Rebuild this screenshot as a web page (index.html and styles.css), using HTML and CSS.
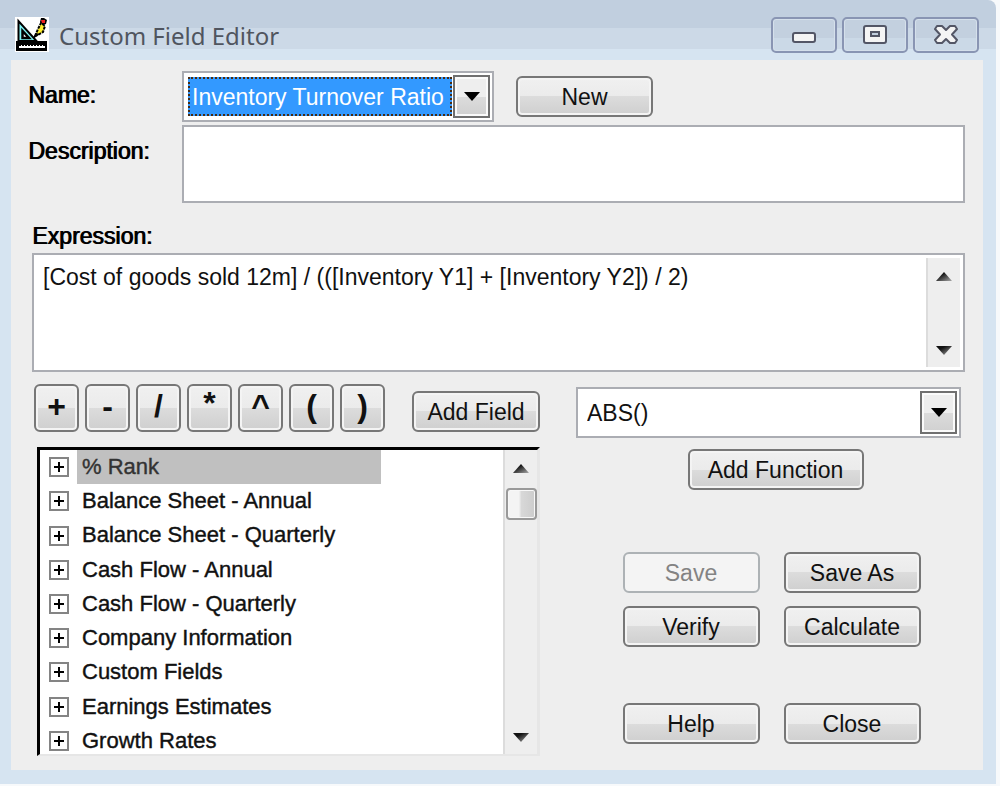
FILE: index.html
```html
<!DOCTYPE html>
<html lang="en">
<head>
<meta charset="utf-8">
<meta name="viewport" content="width=device-width, initial-scale=1">
<title>Custom Field Editor</title>
<link rel="stylesheet" href="styles.css">
</head>
<body>
<svg class="defs" width="0" height="0" aria-hidden="true">
  <linearGradient id="shade" x1="0" y1="0" x2="1" y2="1"><stop offset="0.3" stop-color="#111"/><stop offset="1" stop-color="#aaa"/></linearGradient>
</svg>
<div class="window">
  <header class="titlebar">
    <svg class="app-icon" viewBox="0 0 34 35" aria-hidden="true">
      <rect width="34" height="35" fill="#fff"/>
      <path d="M3.500 4v20h18z" fill="#7ff4f4" stroke="#000" stroke-width="2"/>
      <path d="M7.500 14v7h6.500z" fill="#fff" stroke="#000" stroke-width="2.500"/>
      <path d="M20 19l3-7 3-6 4 3-2 6-5 3z" fill="#ffee2a" stroke="#000" stroke-width="2" stroke-dasharray="3 1"/>
      <path d="M25 5l1-4h3l3 2-1 4-3 1z" fill="#000"/>
      <path d="M26 3h4v3h-3z" fill="#f02020"/>
      <path d="M18 22l3-6 4 1z" fill="#000"/>
      <path d="M1 24h31v10H1z" fill="#000"/>
      <path d="M4 31h26v-2h-2v-1h-1v1h-2v-1h-1v1h-2v-1h-1v1h-2v-1h-1v1h-2v-1h-1v1h-2v-1h-1v1h-2v-1H9v1H7v-1H6v1H4z" fill="#fff"/>
    </svg>
    <h1 class="title">Custom Field Editor</h1>
    <div class="window-buttons">
      <button class="window-button" type="button" aria-label="Minimize">
        <svg width="26" height="22" viewBox="0 0 26 22"><rect x="2" y="9" width="22" height="9" rx="2" fill="#f4f4f4" stroke="#535666" stroke-width="2"/></svg>
      </button>
      <button class="window-button" type="button" aria-label="Maximize">
        <svg width="26" height="22" viewBox="0 0 26 22"><rect x="2" y="2" width="22" height="17" rx="2" fill="#f4f4f4" stroke="#535666" stroke-width="2"/><rect x="9" y="8" width="8" height="4" fill="#c3d0df" stroke="#535666" stroke-width="2"/></svg>
      </button>
      <button class="window-button" type="button" aria-label="Close window">
        <svg width="26" height="22" viewBox="0 0 26 22"><path d="M4 2h5l4 4 4-4h5l2 3-5 5.500 5 5.500-2 3h-5l-4-4-4 4H4l-2-3 5-5.500L2 5z" fill="#f4f4f4" stroke="#535666" stroke-width="2" stroke-linejoin="round"/></svg>
      </button>
    </div>
  </header>

  <main class="panel">
    <div class="fields">
      <label class="label name-label" for="name">Name:</label>
      <div class="name-row">
        <div class="combo combo-name">
          <select id="name" class="select select-active"><option>Inventory Turnover Ratio</option></select>
          <span class="combo-arrow" aria-hidden="true"><svg width="16" height="9" viewBox="0 0 16 9"><path d="M0 0h16L8 9z"/></svg></span>
        </div>
        <button class="button" type="button">New</button>
      </div>
      <label class="label description-label" for="description">Description:</label>
      <textarea id="description" class="description"></textarea>
    </div>

    <div class="expression">
      <label class="label" for="expression">Expression:</label>
      <div class="expression-box">
        <textarea id="expression" class="expression-text">[Cost of goods sold 12m] / (([Inventory Y1] + [Inventory Y2]) / 2)</textarea>
        <div class="scrollbar" aria-hidden="true">
          <svg width="16" height="9" viewBox="0 0 16 9"><path d="M0 9h16L8 0z"/></svg>
          <svg width="16" height="9" viewBox="0 0 16 9"><path d="M0 0h16L8 9z"/></svg>
        </div>
      </div>
    </div>

    <div class="lower">
      <section class="picker">
        <div class="toolbar">
          <div class="operators">
            <button class="button operator" type="button">+</button>
            <button class="button operator" type="button">-</button>
            <button class="button operator" type="button">/</button>
            <button class="button operator raised" type="button">*</button>
            <button class="button operator" type="button">^</button>
            <button class="button operator" type="button">(</button>
            <button class="button operator" type="button">)</button>
          </div>
          <button class="button add-field" type="button">Add Field</button>
        </div>
        <div class="tree">
          <ul class="tree-list">
            <li class="tree-item"><button class="expander" type="button" aria-label="Expand % Rank"></button><span class="tree-name selected">% Rank</span></li>
            <li class="tree-item"><button class="expander" type="button" aria-label="Expand Balance Sheet - Annual"></button><span class="tree-name">Balance Sheet - Annual</span></li>
            <li class="tree-item"><button class="expander" type="button" aria-label="Expand Balance Sheet - Quarterly"></button><span class="tree-name">Balance Sheet - Quarterly</span></li>
            <li class="tree-item"><button class="expander" type="button" aria-label="Expand Cash Flow - Annual"></button><span class="tree-name">Cash Flow - Annual</span></li>
            <li class="tree-item"><button class="expander" type="button" aria-label="Expand Cash Flow - Quarterly"></button><span class="tree-name">Cash Flow - Quarterly</span></li>
            <li class="tree-item"><button class="expander" type="button" aria-label="Expand Company Information"></button><span class="tree-name">Company Information</span></li>
            <li class="tree-item"><button class="expander" type="button" aria-label="Expand Custom Fields"></button><span class="tree-name">Custom Fields</span></li>
            <li class="tree-item"><button class="expander" type="button" aria-label="Expand Earnings Estimates"></button><span class="tree-name">Earnings Estimates</span></li>
            <li class="tree-item"><button class="expander" type="button" aria-label="Expand Growth Rates"></button><span class="tree-name">Growth Rates</span></li>
          </ul>
          <div class="scrollbar tree-scrollbar" aria-hidden="true">
            <svg width="16" height="9" viewBox="0 0 16 9"><path d="M0 9h16L8 0z"/></svg>
            <span class="thumb"></span>
            <svg class="scroll-down" width="16" height="9" viewBox="0 0 16 9"><path d="M0 0h16L8 9z"/></svg>
          </div>
        </div>
      </section>

      <section class="functions">
        <div class="combo">
          <select class="select" aria-label="Function"><option>ABS()</option></select>
          <span class="combo-arrow" aria-hidden="true"><svg width="16" height="9" viewBox="0 0 16 9"><path d="M0 0h16L8 9z"/></svg></span>
        </div>
        <button class="button add-function" type="button">Add Function</button>
        <div class="actions">
          <button class="button" type="button" disabled>Save</button>
          <button class="button" type="button">Save As</button>
          <button class="button" type="button">Verify</button>
          <button class="button" type="button">Calculate</button>
        </div>
        <div class="actions actions-end">
          <button class="button" type="button">Help</button>
          <button class="button" type="button">Close</button>
        </div>
      </section>
    </div>
  </main>
</div>
</body>
</html>
```
FILE: styles.css
```css
* { box-sizing: border-box; }

body {
  margin: 0;
  background: #f7f9fb;
  color: #111;
  font-family: "Liberation Sans", Arial, sans-serif;
  font-size: 23px;
}

button, select, textarea { font: inherit; color: inherit; }

.defs { display: block; }

.window {
  margin-right: 4px;
  padding: 0 13px 14px 11px;
  border-radius: 0 8px 0 0;
  background: linear-gradient(#c1cfdf 0 28px, #ccd9e7 28px 49px, #d6e4f1 49px);
}

.titlebar {
  display: flex;
  align-items: flex-start;
  height: 60px;
  padding: 17px 4px 0 4px;
}

.app-icon { width: 34px; height: 35px; }

.title {
  flex: 1;
  margin: 2px 0 0 10px;
  color: #50555f;
  font: 24px/34px "Noto Sans", "Open Sans", sans-serif;
}

.window-buttons { display: flex; gap: 5px; }

.window-button {
  display: grid;
  place-items: center;
  width: 66px;
  height: 36px;
  padding: 0;
  border: 2px solid #8995b3;
  border-radius: 5px;
  background: linear-gradient(#c3d0df 60%, #cbd9e7 60%);
  box-shadow: inset 0 0 0 1px #d5e0eb;
}

.panel {
  padding: 11px 18px 14px 17px;
  background: #eee;
}

.label { line-height: 28px; text-shadow: 1px 0 #000; color: #000; }

.fields {
  display: grid;
  grid-template-columns: 154px 1fr;
  row-gap: 3px;
}

.name-label { padding-top: 10px; }
.description-label { padding-top: 12px; }

.name-row { display: flex; align-items: center; gap: 22px; }

.combo {
  display: grid;
  grid-template-columns: 1fr 37px;
  gap: 3px;
  height: 51px;
  padding: 2px;
  border: 2px solid #abadb3;
  background: #fff;
}

.combo-name { width: 312px; }

.select {
  appearance: none;
  grid-area: 1 / 1 / 2 / 3;
  width: 100%;
  padding: 0 40px 0 7px;
  border: 0;
  background: transparent;
}

.select-active {
  width: 264px;
  margin: 2px 0 2px 2px;
  padding: 0 0 0 2px;
  border: 2px dotted #4a2b10;
  background: #3399ff;
  color: #fff;
}

.combo-arrow {
  grid-area: 1 / 2;
  display: grid;
  place-items: center;
  border: 2px solid #707070;
  background: linear-gradient(#eee 50%, #dcdcdc 50%, #d0d0d0);
  box-shadow: inset 0 0 0 2px #fafafa;
  pointer-events: none;
}

.button {
  min-width: 137px;
  height: 41px;
  padding: 0;
  border: 2px solid #777;
  border-radius: 6px;
  background: linear-gradient(#f0f0f0, #ebebeb 50%, #dcdcdc 50%, #cfcfcf);
  box-shadow: inset 0 0 0 2px #f4f4f4;
  line-height: 26px;
}

.button:disabled {
  border-color: #adb2b5;
  background: #f4f4f4;
  color: #838383;
}

textarea { resize: none; border: 0; background: #fff; }

.description {
  width: 100%;
  height: 78px;
  padding: 8px;
  border: 2px solid #abadb3;
}

.expression { margin-top: 19px; padding-left: 4px; }
.expression .label { display: block; }

.expression-box {
  display: flex;
  height: 119px;
  margin-top: 3px;
  padding: 3px;
  border: 2px solid #abadb3;
  background: #fff;
}

.expression-text { flex: 1; padding: 5px 0 0 6px; overflow: hidden; line-height: 28px; }

.scrollbar {
  display: flex;
  flex-direction: column;
  align-items: center;
  justify-content: space-between;
  width: 34px;
  padding: 14px 0 12px;
  border-left: 2px solid #dcdcdc;
  background: #eee;
  fill: url(#shade);
}

.lower {
  display: grid;
  grid-template-columns: 506px 1fr;
  gap: 36px;
  margin-top: 12px;
  padding: 0 4px 0 6px;
}

.toolbar { display: flex; align-items: flex-end; justify-content: space-between; }
.operators { display: flex; gap: 6px; }

.operator {
  min-width: 45px;
  height: 48px;
  padding-bottom: 5px;
  font-size: 32px;
  font-weight: bold;
}

.raised { padding-bottom: 10px; }

.add-field { min-width: 128px; }

.tree {
  display: flex;
  height: 309px;
  margin: 15px 0 0 3px;
  border: solid;
  border-width: 3px 3px 2px;
  border-color: #000 #e6e6e6 #e6e6e6 #000;
  background: #fff;
  overflow: hidden;
}

.tree-list {
  flex: 1;
  display: grid;
  grid-template-rows: repeat(9, 1fr);
  height: 308px;
  margin: 0;
  padding: 0;
  list-style: none;
  font-size: 22px;
}

.tree-item { display: flex; align-items: center; gap: 8px; padding-left: 9px; }

.expander {
  width: 20px;
  height: 20px;
  padding: 0;
  border: 2px solid #848484;
  background:
    linear-gradient(#000, #000) center / 10px 2px no-repeat,
    linear-gradient(#000, #000) center / 2px 10px no-repeat,
    #fff;
}

.tree-name {
  align-self: stretch;
  padding: 0 5px;
  line-height: 34px;
  -webkit-text-stroke: 0.4px;
}

.selected { width: 304px; background: #c0c0c0; color: #333; }

.tree-scrollbar { justify-content: flex-start; }

.thumb {
  width: 31px;
  height: 32px;
  margin-top: 15px;
  border: 2px solid #999;
  border-radius: 4px;
  background: linear-gradient(90deg, #f4f4f4 40%, #d8d8d8 50%, #ccc);
  box-shadow: inset 0 0 0 1px #f8f8f8;
}

.scroll-down { margin-top: auto; }

.functions { display: flex; flex-direction: column; padding-top: 3px; }
.add-function { align-self: center; min-width: 176px; margin-top: 11px; margin-left: 14px; }

.actions {
  display: grid;
  grid-template-columns: 137px 137px;
  justify-content: center;
  gap: 13px 24px;
  margin-top: 62px;
  padding-left: 6px;
}

.actions-end { margin-top: 56px; }
```
